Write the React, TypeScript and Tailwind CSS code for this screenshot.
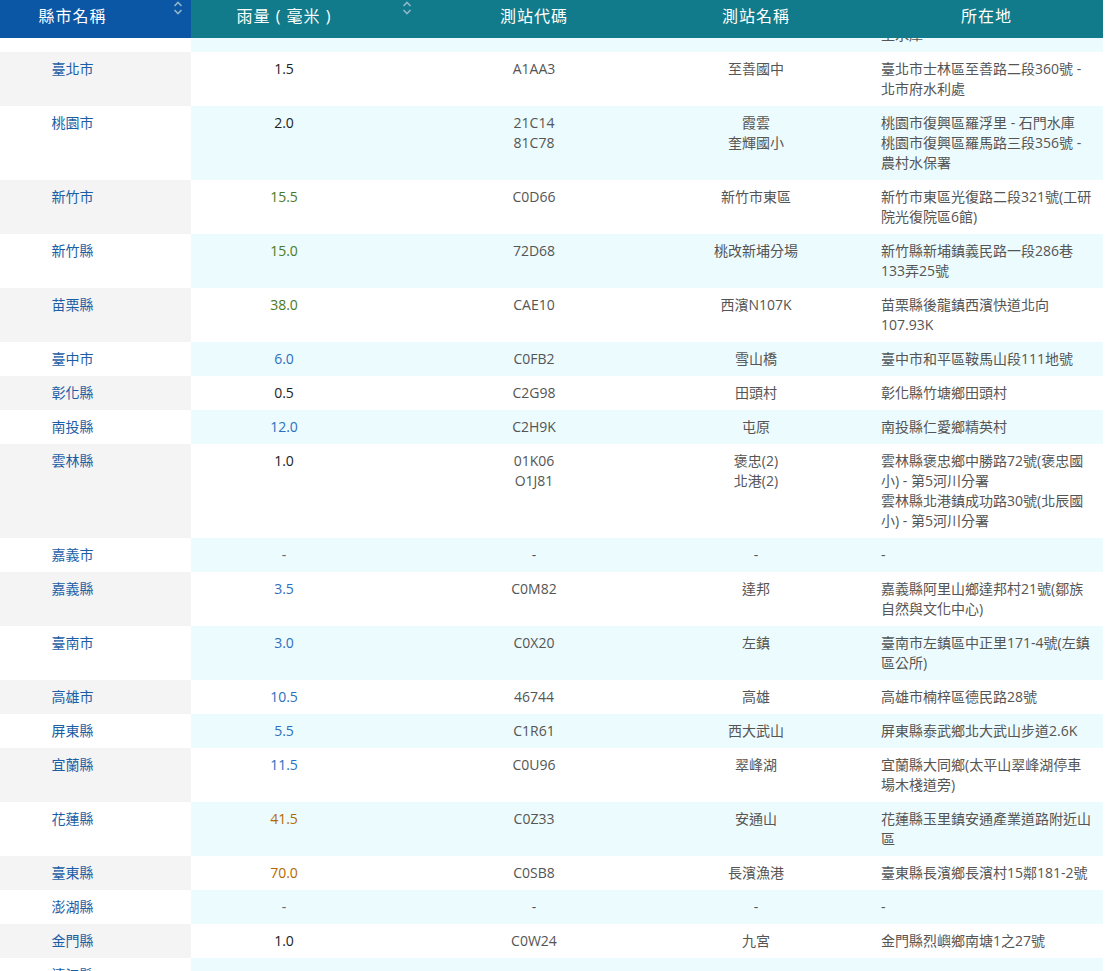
import React from "react";

type Row = { c: string; r: string; rc: string; codes: string[]; names: string[]; addr: string[] };
const K = "#222", G = "#4b7a23", B = "#2d6fc0", O = "#b26a00", D = "#666";
const rows: Row[] = [
  { c: "臺北市", r: "1.5", rc: K, codes: ["A1AA3"], names: ["至善國中"], addr: ["臺北市士林區至善路二段360號 -", "北市府水利處"] },
  { c: "桃園市", r: "2.0", rc: K, codes: ["21C14", "81C78"], names: ["霞雲", "奎輝國小"], addr: ["桃園市復興區羅浮里 - 石門水庫", "桃園市復興區羅馬路三段356號 -", "農村水保署"] },
  { c: "新竹市", r: "15.5", rc: G, codes: ["C0D66"], names: ["新竹市東區"], addr: ["新竹市東區光復路二段321號(工研", "院光復院區6館)"] },
  { c: "新竹縣", r: "15.0", rc: G, codes: ["72D68"], names: ["桃改新埔分場"], addr: ["新竹縣新埔鎮義民路一段286巷", "133弄25號"] },
  { c: "苗栗縣", r: "38.0", rc: G, codes: ["CAE10"], names: ["西濱N107K"], addr: ["苗栗縣後龍鎮西濱快道北向", "107.93K"] },
  { c: "臺中市", r: "6.0", rc: B, codes: ["C0FB2"], names: ["雪山橋"], addr: ["臺中市和平區鞍馬山段111地號"] },
  { c: "彰化縣", r: "0.5", rc: K, codes: ["C2G98"], names: ["田頭村"], addr: ["彰化縣竹塘鄉田頭村"] },
  { c: "南投縣", r: "12.0", rc: B, codes: ["C2H9K"], names: ["屯原"], addr: ["南投縣仁愛鄉精英村"] },
  { c: "雲林縣", r: "1.0", rc: K, codes: ["01K06", "O1J81"], names: ["褒忠(2)", "北港(2)"], addr: ["雲林縣褒忠鄉中勝路72號(褒忠國", "小) - 第5河川分署", "雲林縣北港鎮成功路30號(北辰國", "小) - 第5河川分署"] },
  { c: "嘉義市", r: "-", rc: D, codes: ["-"], names: ["-"], addr: ["-"] },
  { c: "嘉義縣", r: "3.5", rc: B, codes: ["C0M82"], names: ["達邦"], addr: ["嘉義縣阿里山鄉達邦村21號(鄒族", "自然與文化中心)"] },
  { c: "臺南市", r: "3.0", rc: B, codes: ["C0X20"], names: ["左鎮"], addr: ["臺南市左鎮區中正里171-4號(左鎮", "區公所)"] },
  { c: "高雄市", r: "10.5", rc: B, codes: ["46744"], names: ["高雄"], addr: ["高雄市楠梓區德民路28號"] },
  { c: "屏東縣", r: "5.5", rc: B, codes: ["C1R61"], names: ["西大武山"], addr: ["屏東縣泰武鄉北大武山步道2.6K"] },
  { c: "宜蘭縣", r: "11.5", rc: B, codes: ["C0U96"], names: ["翠峰湖"], addr: ["宜蘭縣大同鄉(太平山翠峰湖停車", "場木棧道旁)"] },
  { c: "花蓮縣", r: "41.5", rc: O, codes: ["C0Z33"], names: ["安通山"], addr: ["花蓮縣玉里鎮安通產業道路附近山", "區"] },
  { c: "臺東縣", r: "70.0", rc: O, codes: ["C0SB8"], names: ["長濱漁港"], addr: ["臺東縣長濱鄉長濱村15鄰181-2號"] },
  { c: "澎湖縣", r: "-", rc: D, codes: ["-"], names: ["-"], addr: ["-"] },
  { c: "金門縣", r: "1.0", rc: K, codes: ["C0W24"], names: ["九宮"], addr: ["金門縣烈嶼鄉南塘1之27號"] },
  { c: "連江縣", r: "-", rc: D, codes: ["-"], names: ["-"], addr: ["-"] },
];

const Sort = () => (
  <svg width="10" height="14" viewBox="0 0 10 14" className="absolute top-[1px] right-[8px]">
    <path d="M1.5 5 L5 1.5 L8.5 5" fill="none" stroke="#8fb6c8" strokeWidth="1.6" />
    <path d="M1.5 9 L5 12.5 L8.5 9" fill="none" stroke="#8fb6c8" strokeWidth="1.6" />
  </svg>
);

function RowView({ row, i }: { row: Row; i: number }) {
  const odd = i % 2 === 0;
  const lines = (a: string[]) => a.map((s, k) => <div key={k} className="whitespace-nowrap">{s}</div>);
  return (
    <div className="grid grid-cols-[191px_229px_228px_222px_233px] text-[14px] leading-5 text-[#555]">
      <div className={`py-[7px] pr-[46px] text-center text-[#1b5ea6] ${odd ? "bg-[#f4f4f4]" : "bg-white"}`}>{row.c}</div>
      <div className={`col-span-4 grid grid-cols-[229px_228px_222px_233px] ${odd ? "bg-white" : "bg-[#ecfbfd]"}`}>
        <div className="py-[7px] pr-[43px] text-center" style={{ color: row.rc }}>{row.r}</div>
        <div className="py-[7px] text-center">{lines(row.codes)}</div>
        <div className="py-[7px] pr-[6px] text-center">{lines(row.names)}</div>
        <div className="py-[7px] pl-[11px] overflow-hidden">{lines(row.addr)}</div>
      </div>
    </div>
  );
}

export default function App() {
  return (
    <div className="w-[1112px] h-[971px] overflow-hidden bg-white" style={{ fontFamily: '"Open Sans", "Noto Sans CJK TC", sans-serif' }}>
      <div className="w-[1103px]">
        <div className="grid grid-cols-[191px_229px_228px_222px_233px] h-[38px] text-white text-[16px] tracking-[1px]">
          <div className="relative bg-[#0b56a5] flex items-center justify-center pr-[46px] pb-[6px]">縣市名稱<Sort /></div>
          <div className="relative bg-[#117b8b] flex items-center justify-center pr-[43px] pb-[6px] whitespace-nowrap">雨量 ( 毫米 )<Sort /></div>
          <div className="bg-[#117b8b] flex items-center justify-center pb-[6px]">測站代碼</div>
          <div className="bg-[#117b8b] flex items-center justify-center pr-[6px] pb-[6px]">測站名稱</div>
          <div className="bg-[#117b8b] flex items-center justify-center pb-[6px]">所在地</div>
        </div>
        <div className="h-[14px] overflow-hidden">
          <div className="mt-[-60px] grid grid-cols-[191px_912px] text-[14px] leading-5 text-[#555]">
            <div className="bg-white h-[74px]"></div>
            <div className="bg-[#ecfbfd] h-[74px] pl-[690px] pt-[7px]">
              <div>新北市石碇區碧山</div><div>里 - 翡翠水庫</div><div>里水庫</div>
            </div>
          </div>
        </div>
        {rows.map((r, i) => <RowView key={i} row={r} i={i} />)}
      </div>
    </div>
  );
}
